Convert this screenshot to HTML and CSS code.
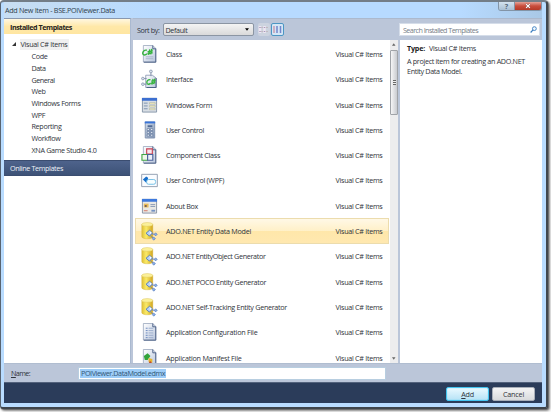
FILE: index.html
```html
<!DOCTYPE html>
<html lang="en">
<head>
<meta charset="utf-8">
<title>Add New Item - BSE.POIViewer.Data</title>
<link rel="stylesheet" href="styles.css">
</head>
<body>
<svg class="defs" width="0" height="0">
<defs>
<linearGradient id="paper" x2="1" y2="1"><stop stop-color="#fff"/><stop offset="1" stop-color="#b9c6dd"/></linearGradient>
<linearGradient id="gold"><stop stop-color="#dfbf35"/><stop offset=".4" stop-color="#faea68"/><stop offset="1" stop-color="#d2a51e"/></linearGradient>
<linearGradient id="steel" x2="1" y2="1"><stop stop-color="#d5dfec"/><stop offset="1" stop-color="#8195b4"/></linearGradient>
<symbol id="page" viewBox="0 0 18 20"><path d="M2.500 1h10l3 3v14.500h-13z" fill="url(#paper)" stroke="#8796b0" stroke-width=".7"/><path d="M12.500 1v3.500h3.200v14.200H3" fill="none" stroke="#485d84" stroke-width="1"/></symbol>
<symbol id="class" viewBox="0 0 18 20"><use href="#page"/><path d="M5 13h8M5 15h8" stroke="#a8b6cb"/><path d="M6.200 6C3.500 5.300 1.600 7.500 1.800 9.500s3 2 4.500.3M8 11l1.300-6M10.200 10.500l1.300-6M7 7.500l5.500-.8M6.800 9.500l5.500-.8" fill="none" stroke="#35b33d" stroke-width="1.500"/></symbol>
<symbol id="interface" viewBox="0 0 18 20"><path d="M5 6h7l4 3v10H5z" fill="url(#paper)" stroke="#7d8dab" stroke-width=".8"/><path d="M16 9v10H6" fill="none" stroke="#485d84"/><path d="M10.500 3v4M3 9.500h3M3 15.500h3" stroke="#8291aa"/><g fill="#dce4ef" stroke="#8392ab" stroke-width=".8"><circle cx="10.500" cy="2" r="1.500"/><circle cx="2" cy="9.500" r="1.400"/><circle cx="2" cy="15.500" r="1.400"/></g><path d="M10 11c-2-1-4 1-3.800 3s2.600 2 4 .5M11.500 16l1.300-6M13.500 15.500l1.200-6M10.800 12.300l4.700-.6M10.500 14.300l4.700-.6" fill="none" stroke="#35b33d" stroke-width="1.400"/></symbol>
<symbol id="form" viewBox="0 0 18 20"><path d="M1.500 3h15v14.500h-15z" fill="#d8dee4" stroke="#8796a9"/><path d="M1 2.500h16v3H1z" fill="#3c6fd0"/><path d="M3 8h4M3 11h4M3 14h4" stroke="#7890ae"/><path d="M9 7.500h6v1.500H9zM9 10.500h6V12H9zM9 13.500h6V15H9z" fill="#fff8c7" stroke="#9aa292" stroke-width=".5"/></symbol>
<symbol id="control" viewBox="0 0 18 20"><path d="M4.500 1.500h10v17h-10z" fill="url(#steel)" stroke="#8193b0"/><path d="M4 1h11v2H4z" fill="#3974d8"/><path d="M7 5h5v2H7z" fill="#506a95"/><g fill="#f0f4fa" stroke="#576f96" stroke-width=".7"><path d="M6.500 8.500H9v2H6.500zM10 8.500h2.500v2H10zM6.500 11.500H9v2H6.500zM10 11.500h2.500v2H10zM6.500 14.500H9v2H6.500zM10 14.500h2.500v2H10z"/></g></symbol>
<symbol id="component" viewBox="0 0 18 20"><use href="#page"/><path d="M6 3.500h6v5.500H6z" fill="#f7e8ed" stroke="#c84254" stroke-width="1.200"/><path d="M1 9.500h6v6H1z" fill="#eef8eb" stroke="#42a744" stroke-width="1.200"/><path d="M7 9.500h5.500v6H7z" fill="#eaf0fa" stroke="#4b619a" stroke-width="1.200"/></symbol>
<symbol id="wpf" viewBox="0 0 18 20"><path d="M.7 4h16.600v13H.7z" fill="#fafcff" stroke="#929eb0"/><path d="M5.500 6.300l2 1.200v4.500l-2 1-3.500-3.500z" fill="#176fcb"/><rect x="6" y="9.500" width="9.500" height="5" rx="2" fill="#f8feff" stroke="#71bde5"/></symbol>
<symbol id="about" viewBox="0 0 18 20"><path d="M1.500 3h15v14.500h-15z" fill="#e9e8e4" stroke="#8894a5"/><path d="M1 2.500h16v3H1z" fill="#3e79dc"/><path d="M3 7.500h5v4H3z" fill="#eabc58"/><path d="M4 9h2v2H4z" fill="#725e5c"/><path d="M10 8.500h5M10 10.500h5" stroke="#8798b5"/><path d="M3 15h4" stroke="#d57562"/><path d="M11 14h4v2h-4z" fill="#7593c3"/></symbol>
<symbol id="data" viewBox="0 0 18 20"><path d="M.8 3v13c0 3 11.700 3 11.700 0V3z" fill="url(#gold)" stroke="#cfb03a" stroke-width=".4"/><ellipse cx="6.650" cy="3" rx="5.800" ry="2" fill="#fbf09a" stroke="#d3b849" stroke-width=".4"/><path d="M11 13l4 .5M10 15l3 2.500" stroke="#7084ae"/><path d="M9 9.200l3.200 2.800-3.300 3.400-3.600-3z" fill="#b5d0f8" stroke="#4976bc" stroke-width=".9"/><path d="M9.300 10l2 1.900-2 1.900z" fill="#fff"/><path d="M15.500 12l1.700 1.500-1.700 1.700-1.500-1.500zM13.500 16.500l1.800 1.500-1.800 1.700-1.500-1.500z" fill="#8bb0e9" stroke="#5279bc" stroke-width=".7"/></symbol>
<symbol id="config" viewBox="0 0 18 20"><use href="#page"/><path d="M5 6h2M5 8.500h2M5 11h2M5 13.500h2M5 16h2" stroke="#6685bc"/><path d="M8 6h5M8 8.500h5M8 11h5M8 13.500h5M8 16h5" stroke="#9aaccc"/></symbol>
<symbol id="manifest" viewBox="0 0 18 20"><use href="#page"/><path d="M3 8l4-3 3 3-3 4H4z" fill="#32a43b"/><path d="M8 10l4 1v4l-4-1z" fill="#e8b52c"/><path d="M9 14l3 3" stroke="#c44c2d" stroke-width="2"/></symbol>
</defs>
</svg>
<div class="window">
<header class="title"><span class="t" data-w="110">Add New Item - BSE.POIViewer.Data</span><div class="caption"><span class="help">?</span><span class="close"><svg viewBox="0 0 8 8"><path d="M1.500 1.500l5 5M6.500 1.500l-5 5" stroke="#813f42" stroke-width="2.600"/><path d="M1.500 1.500l5 5M6.500 1.500l-5 5" stroke="#fff" stroke-width="1.700"/></svg></span></div></header>
<main class="client">
<div class="upper">
<nav class="left">
<div class="installed"><span class="t" data-w="62">Installed Templates</span></div>
<div class="tree">
<div class="root"><svg class="arrow" viewBox="0 0 4 4"><path d="M4 0v4H0z" fill="#333"/></svg><span class="hot"><span class="t" data-w="47">Visual C# Items</span></span></div>
<div class="leaf"><span class="t" data-w="16">Code</span></div><div class="leaf"><span class="t" data-w="14">Data</span></div><div class="leaf"><span class="t" data-w="23">General</span></div><div class="leaf"><span class="t" data-w="14">Web</span></div><div class="leaf"><span class="t" data-w="49">Windows Forms</span></div><div class="leaf"><span class="t" data-w="13.500">WPF</span></div><div class="leaf"><span class="t" data-w="30">Reporting</span></div><div class="leaf"><span class="t" data-w="29">Workflow</span></div><div class="leaf"><span class="t" data-w="65">XNA Game Studio 4.0</span></div>
</div>
<div class="online"><span class="t" data-w="53">Online Templates</span></div>
</nav>
<section class="content">
<div class="toolbar"><span class="t" data-w="22.500">Sort by:</span><div class="select"><span class="t" data-w="22">Default</span><svg viewBox="0 0 5 3"><path d="M0 0h5L2.500 3z"/></svg></div>
<span class="view"><svg viewBox="0 0 9 9"><path d="M1 1v7M5.500 1v7" stroke="#eee7f1" stroke-width="2.500"/><path d="M1 2v1M1 6v1M5.500 2v1M5.500 6v1" stroke="#a69abf" stroke-width="1.500"/><path d="M3 2v1M3 6v1M8 2v1M8 6v1" stroke="#b6a2a2"/></svg></span><span class="view active"><svg viewBox="0 0 9 9"><path d="M1 1v7" stroke="#ca9daf" stroke-width="1.500"/><path d="M4 1v7M7.500 1v7" stroke="#7387cc" stroke-width="1.500"/></svg></span>
<div class="search"><span class="t" data-w="75">Search Installed Templates</span><svg viewBox="0 0 8 8"><path d="M3.500 4.500L.7 7.400" stroke="#377abd" stroke-width="1.400"/><circle cx="5" cy="3" r="2.200" fill="#eef7ff" stroke="#377abd"/></svg></div></div>
<div class="panes">
<div class="list">
<div class="row"><svg><use href="#class"/></svg><span class="t" data-w="16">Class</span><span class="kind t" data-w="47">Visual C# Items</span></div>
<div class="row"><svg><use href="#interface"/></svg><span class="t" data-w="27">Interface</span><span class="kind t" data-w="47">Visual C# Items</span></div>
<div class="row"><svg><use href="#form"/></svg><span class="t" data-w="46">Windows Form</span><span class="kind t" data-w="47">Visual C# Items</span></div>
<div class="row"><svg><use href="#control"/></svg><span class="t" data-w="38">User Control</span><span class="kind t" data-w="47">Visual C# Items</span></div>
<div class="row"><svg><use href="#component"/></svg><span class="t" data-w="54">Component Class</span><span class="kind t" data-w="47">Visual C# Items</span></div>
<div class="row"><svg><use href="#wpf"/></svg><span class="t" data-w="58">User Control (WPF)</span><span class="kind t" data-w="47">Visual C# Items</span></div>
<div class="row"><svg><use href="#about"/></svg><span class="t" data-w="32">About Box</span><span class="kind t" data-w="47">Visual C# Items</span></div>
<div class="row selected"><svg><use href="#data"/></svg><span class="t" data-w="85">ADO.NET Entity Data Model</span><span class="kind t" data-w="47">Visual C# Items</span></div>
<div class="row"><svg><use href="#data"/></svg><span class="t" data-w="99.500">ADO.NET EntityObject Generator</span><span class="kind t" data-w="47">Visual C# Items</span></div>
<div class="row"><svg><use href="#data"/></svg><span class="t" data-w="100">ADO.NET POCO Entity Generator</span><span class="kind t" data-w="47">Visual C# Items</span></div>
<div class="row"><svg><use href="#data"/></svg><span class="t" data-w="121">ADO.NET Self-Tracking Entity Generator</span><span class="kind t" data-w="47">Visual C# Items</span></div>
<div class="row"><svg><use href="#config"/></svg><span class="t" data-w="91.500">Application Configuration File</span><span class="kind t" data-w="47">Visual C# Items</span></div>
<div class="row"><svg><use href="#manifest"/></svg><span class="t" data-w="75.500">Application Manifest File</span><span class="kind t" data-w="47">Visual C# Items</span></div>
</div>
<div class="scroll"><svg class="up" viewBox="0 0 4 3"><path d="M0 3h4L2 0z"/></svg><div class="thumb"><i></i></div><svg class="down" viewBox="0 0 4 3"><path d="M0 0h4L2 3z"/></svg></div>
<aside class="details"><div class="type"><b class="t" data-w="18">Type:</b><span class="t" data-w="47">Visual C# Items</span></div><div class="desc"><span class="t" data-w="118">A project item for creating an ADO.NET</span><span class="t" data-w="55">Entity Data Model.</span></div></aside>
</div>
</section>
</div>
<div class="name"><span class="label t" data-w="19"><u>N</u>ame:</span><div class="input"><span class="marked"><span class="t" data-w="84">POIViewer.DataModel.edmx</span></span></div></div>
<footer class="footer"><div class="button add"><span class="t" data-w="12.500"><u>A</u>dd</span></div><div class="button"><span class="t" data-w="21">Cancel</span></div></footer>
</main>
</div>
<script src="fit.js"></script>
</body>
</html>
```
FILE: styles.css
```css
* { box-sizing: border-box; }
body { margin: 0; width: 551px; height: 412px; overflow: hidden; background: #fff; color: #30343b; font: 7.2px/10px "Open Sans", "Noto Sans", sans-serif; }
.defs { position: absolute; }
svg { flex: none; overflow: visible; }
.t { white-space: pre; flex: none; }
.window { width: 548px; height: 409px; border: 1px solid #596471; border-top: 2px solid #737d87; border-right: 2px solid #41474e; border-bottom: 2px solid #3e444b; border-radius: 4px 4px 3px 3px; padding: 0 4px 4px 3px; background: #b9dcff; box-shadow: 1px 1px 2px #555, 2px 2px 3px #aaa; display: flex; flex-direction: column; }
.title { height: 16px; flex: none; display: flex; align-items: center; padding: 0 0 0 1px; background: linear-gradient(90deg, #c8def2, #b7daff 28%, #b7daff 85%, #a9c8e6); color: #303e4d; }
.caption { margin-left: auto; align-self: flex-start; display: flex; height: 9px; border: 1px solid #8294a7; border-top: 0; border-radius: 0 0 3px 3px; overflow: hidden; }
.help { width: 16px; background: linear-gradient(#d3e2ef, #a9bfd3); text-align: center; line-height: 8px; font-weight: bold; color: #526477; border-right: 1px solid #8294a7; }
.close { width: 26px; background: linear-gradient(#e4a197, #c94d3c 50%, #b53928); display: flex; justify-content: center; align-items: center; }
.close svg { width: 6px; height: 6px; }
.client { height: 385px; flex: none; display: flex; flex-direction: column; background: #bbc6d9; }
.upper { height: 345px; display: flex; }
.left { width: 127px; flex: none; background: #fff; border-top: 1px solid #8997ae; border-right: 1px solid #aab9d0; }
.installed { height: 15px; padding-left: 6px; display: flex; align-items: center; background: linear-gradient(#fff7e1, #ffe8a8 50%, #ffe6a1); color: #26231c; font-weight: bold; }
.tree { height: 125.500px; padding-top: 4.600px; }
.root, .leaf { height: 11.700px; display: flex; align-items: center; }
.root { padding-left: 8px; }
.arrow { width: 4px; height: 4px; margin-right: 3.500px; }
.hot { background: #f0f0f0; height: 11px; padding: 0 1px; display: flex; align-items: center; }
.leaf { padding-left: 27.500px; }
.online { height: 16px; padding-left: 6px; display: flex; align-items: center; color: #eef2f8; background: linear-gradient(#4e638c, #3d5277); border: 1px solid #3b4d70; border-width: 1px 0; }
.content { flex: 1; min-width: 0; margin-left: 2px; display: flex; flex-direction: column; }
.toolbar { height: 22px; flex: none; display: flex; align-items: center; padding: 0 2px 0 4px; border-top: 1px solid #acb9cd; }
.select { width: 91px; height: 13px; margin-left: 3px; padding: 0 4px 0 2px; border: 1px solid #8b95a3; border-radius: 2px; background: linear-gradient(#f4f4f4, #d9d9da); display: flex; align-items: center; justify-content: space-between; }
.select svg { width: 4px; height: 3px; }
.view { width: 12px; height: 13px; margin-left: 4px; background: #ccd3df; border-radius: 2px; display: flex; align-items: center; justify-content: center; }
.view svg { width: 9px; height: 9px; }
.view.active { margin-left: 1px; width: 13px; border: 1px solid #4c96c3; background: #d4e6f6; }
.search { margin-left: auto; width: 141px; height: 13px; display: flex; align-items: center; justify-content: space-between; padding: 0 2px 0 3px; background: #fff; border: 1px solid #d5dde9; color: #777e89; }
.search svg { width: 7px; height: 7px; }
.panes { height: 323px; display: flex; }
.list { width: 257px; flex: none; height: 323px; overflow: hidden; background: #fff; padding: 1.300px 1px 0 2px; }
.row { height: 25.300px; display: flex; align-items: center; padding: 0 6.500px 0 6px; border: 1px solid transparent; border-width: 1px 0; }
.row svg { width: 17px; height: 20px; margin-right: 8px; }
.row .kind { margin-left: auto; }
.selected { background: linear-gradient(#fff8e6, #fff0c8 49%, #ffe7aa 50%, #ffe8b0); border: 1px solid #ecdcad; padding: 0 5.500px 0 5px; }
.scroll { width: 8px; flex: none; display: flex; flex-direction: column; align-items: center; background: #ededee; padding: 3px 0; }
.scroll svg { width: 3.500px; height: 3px; fill: #666; }
.thumb { margin-top: 4px; width: 8px; height: 65px; border: 1px solid #a0a3a8; border-radius: 1px; background: linear-gradient(90deg, #f5f5f6, #c9cbd0); display: flex; align-items: center; justify-content: center; }
.thumb i { width: 3px; height: 5px; background: repeating-linear-gradient(#666 0 1px, #eee 1px 2px); }
.down { margin-top: auto; }
.details { flex: 1; min-width: 0; margin-left: 2px; background: #fff; padding: 3px 0 0 7px; }
.type { display: flex; gap: 4px; }
.type b { color: #222; }
.desc { display: flex; flex-direction: column; align-items: flex-start; margin-top: 4px; line-height: 9.500px; }
.name { height: 19px; flex: none; display: flex; align-items: center; padding-left: 7px; border-top: 1px solid #b0bdd0; }
.label { margin-right: auto; }
.input { width: 308px; height: 13px; margin-right: 156px; background: #fff; border: 1px solid #b8cee0; padding-left: 1px; display: flex; align-items: center; }
.marked { height: 9px; padding: 0 1px; display: flex; align-items: center; background: #9dcdf8; color: #315777; }
.footer { height: 21px; flex: none; display: flex; align-items: center; justify-content: flex-end; gap: 3px; padding: 1px 7px 0 0; background: #2b3c5a; border-top: 1px solid #53627c; }
.button { width: 43px; height: 14px; display: flex; align-items: center; justify-content: center; background: linear-gradient(#f4f4f5, #d8dadd); border: 1px solid #a9afb9; border-radius: 2px; }
.add { background: linear-gradient(#eaf9ff, #b7e3f6); border: 1px solid #44c4ef; box-shadow: inset 0 0 1px #30c7f9; }
```
FILE: fit.js
```js
// Condense each label to its design width through letter spacing.
document.querySelectorAll('.t').forEach(el => {
  const width = el.getBoundingClientRect().width;
  const count = el.textContent.length;
  el.style.letterSpacing = ((Number(el.dataset.w) - width) / count) + 'px';
});
```
